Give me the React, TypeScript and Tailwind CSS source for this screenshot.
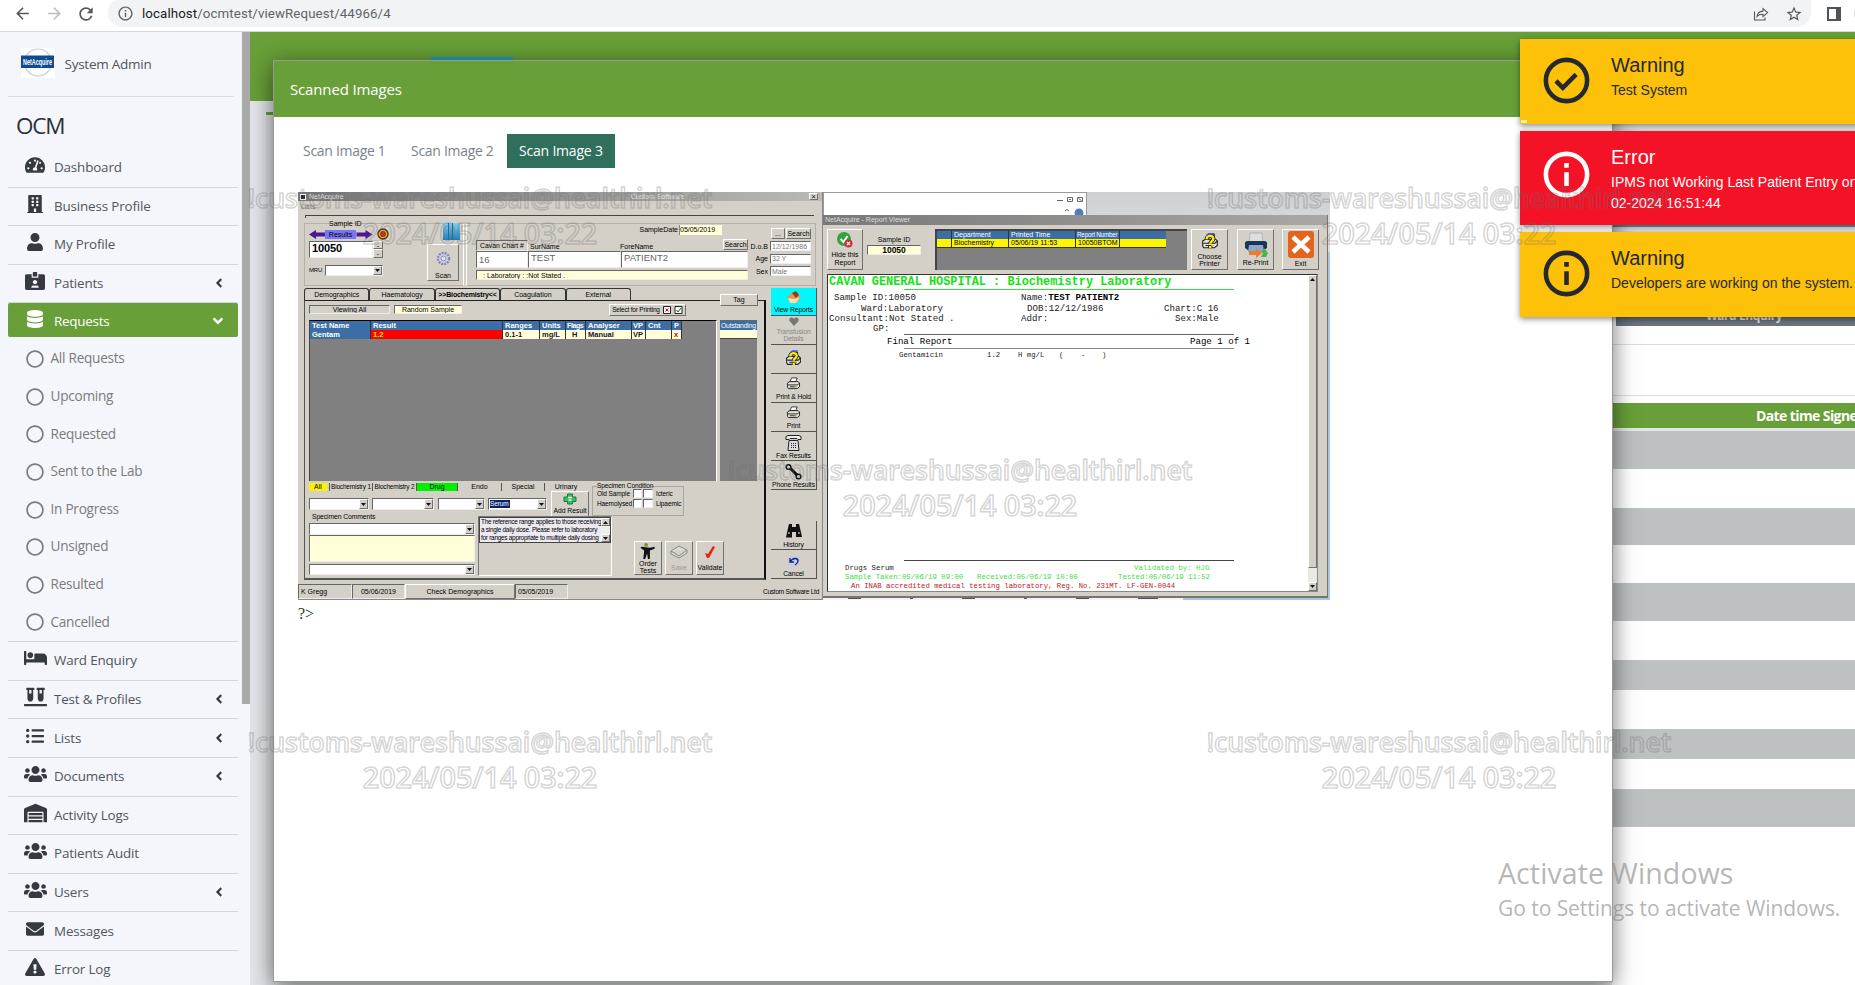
import React from "react";
import {
  FaTachometerAlt, FaBuilding, FaUser, FaIdCardAlt, FaDatabase, FaBed, FaVials, FaListUl,
  FaUsers, FaWarehouse, FaEnvelope, FaExclamationTriangle, FaAngleLeft, FaAngleDown, FaRegCircle,
} from "react-icons/fa";
import { MdArrowBack, MdArrowForward, MdRefresh, MdInfoOutline, MdStarBorder } from "react-icons/md";

type Kids = { children?: React.ReactNode; className?: string };

/* ---------- Browser bar ---------- */

function BrowserBar() {
  return (
    <div className="flex h-8 shrink-0 items-start border-b border-[#d5d7da] bg-white font-['Roboto',sans-serif]">
      <div className="flex h-[27px] w-[108px] shrink-0 items-center pl-[13px] text-[#54575b]">
        <MdArrowBack className="size-[19px]" />
        <MdArrowForward className="ml-[13px] size-[19px] text-[#bbbdc0]" />
        <MdRefresh className="ml-[12px] size-[20px]" />
      </div>
      <div className="flex h-[27px] w-[1703px] shrink-0 items-center rounded-b-[14px] rounded-tl-[10px] bg-[#f1f3f4] pl-[9px]">
        <MdInfoOutline className="size-[17px] text-[#5f6368]" />
        <span className="ml-[8px] text-[13.300px] tracking-[0.100px] text-[#5f6368]">
          <span className="text-[#202124]">localhost</span>/ocmtest/viewRequest/44966/4
        </span>
        <div className="ml-auto flex items-center gap-[16px] pr-[8px] text-[#54575b]">
          <svg viewBox="0 0 16 16" className="size-[16px]" fill="none" stroke="currentColor" strokeWidth="1.1">
            <path d="M1.500 5.500v8.500h10.500v-2.500" />
            <path d="M4 10.500c.4-3.300 2.300-5.200 6-5.400V2.600l4.600 4-4.600 4V8.200c-2.700 0-4.500.5-6 2.300z" />
          </svg>
          <MdStarBorder className="size-[18px]" />
        </div>
      </div>
      <div className="flex h-[27px] items-center pl-[16px]">
        <div className="h-[14px] w-[14px] border-2 border-r-[5px] border-[#505357]" />
        <div className="ml-[13px] size-[20px] shrink-0 rounded-full bg-[#dcdee0]" />
      </div>
    </div>
  );
}

/* ---------- Sidebar ---------- */

type Item = { label: string; icon: React.ComponentType<{ className?: string }>; arrow?: boolean; size?: string };

const topItems: Item[] = [
  { label: "Dashboard", icon: FaTachometerAlt, size: "h-[20px] w-[20px]" },
  { label: "Business Profile", icon: FaBuilding, size: "h-[18px] w-[18px]" },
  { label: "My Profile", icon: FaUser, size: "h-[18px] w-[18px]" },
  { label: "Patients", icon: FaIdCardAlt, arrow: true, size: "h-[20px] w-[20px]" },
];
const subItems = ["All Requests", "Upcoming", "Requested", "Sent to the Lab", "In Progress", "Unsigned", "Resulted", "Cancelled"];
const bottomItems: Item[] = [
  { label: "Ward Enquiry", icon: FaBed, size: "h-[22px] w-[23px]" },
  { label: "Test & Profiles", icon: FaVials, arrow: true, size: "h-[22px] w-[23px]" },
  { label: "Lists", icon: FaListUl, arrow: true, size: "h-[18px] w-[18px]" },
  { label: "Documents", icon: FaUsers, arrow: true, size: "h-[22px] w-[23px]" },
  { label: "Activity Logs", icon: FaWarehouse, size: "h-[22px] w-[23px]" },
  { label: "Patients Audit", icon: FaUsers, size: "h-[22px] w-[23px]" },
  { label: "Users", icon: FaUsers, arrow: true, size: "h-[22px] w-[23px]" },
  { label: "Messages", icon: FaEnvelope, size: "h-[18px] w-[18px]" },
  { label: "Error Log", icon: FaExclamationTriangle, size: "h-[20px] w-[20px]" },
];

function NavRow({ item }: { item: Item }) {
  const Icon = item.icon;
  return (
    <div className="flex h-[38.600px] shrink-0 items-center border-b border-[#d3d6da] pb-[1px] text-[#343a40]">
      <span className="flex w-[54px] -translate-y-[2px] justify-center">
        <Icon className={item.size} />
      </span>
      <span className="-ml-[8px] text-[13.400px] tracking-[-0.150px] text-[#50555b]">{item.label}</span>
      {item.arrow && <FaAngleLeft className="mr-[12px] ml-auto size-[14px]" />}
    </div>
  );
}

function Sidebar() {
  return (
    <aside className="flex w-[250px] shrink-0 bg-[#f4f6fb] font-['Open_Sans','Noto_Sans',sans-serif]">
      <nav className="flex w-[242px] shrink-0 flex-col overflow-hidden pr-[4px] pl-[8px]">
        <div className="mr-[4px] flex h-[65px] shrink-0 items-center border-b border-[#d9dbe0] pb-[2px] pl-[13px]">
          <svg viewBox="0 0 34 30" className="h-[30px] w-[34px]">
            <rect width="34" height="30" fill="#fff" />
            <circle cx="17" cy="14.500" r="13.500" fill="#fff" stroke="#ccc" strokeWidth="1.200" />
            <rect x="0" y="7.500" width="33" height="12.500" fill="#0f4b94" />
            <text x="2" y="16.800" fontSize="8.500" fontWeight="700" fill="#fff" textLength="29" lengthAdjust="spacingAndGlyphs" fontFamily="Liberation Sans">NetAcquire</text>
          </svg>
          <span className="mt-[2px] ml-[9.500px] text-[13.500px] tracking-[-0.250px] text-[#50555b]">System Admin</span>
        </div>
        <div className="flex h-[52px] shrink-0 items-center pt-[6px] pl-[8px] text-[22.500px] tracking-[-1.200px] text-[#2c3034]">OCM</div>
        <div className="flex flex-col">
          {topItems.map((i) => <NavRow key={i.label} item={i} />)}
          <div className="flex h-[34px] shrink-0 items-center rounded-[2px] bg-[#689f38] pt-px text-white">
            <span className="flex w-[54px] -translate-y-[2px] justify-center"><FaDatabase className="size-[18px]" /></span>
            <span className="-ml-[8px] text-[13.500px] tracking-[-0.300px]">Requests</span>
            <FaAngleDown className="mr-[12px] ml-auto size-[16px]" />
          </div>
          <div className="flex flex-col border-b border-[#d3d6da] pt-[3px]">
            {subItems.map((s) => (
              <div key={s} className="flex h-[37.600px] items-center pl-[17.500px] text-[#7b7b7b]">
                <FaRegCircle className="size-[18px]" />
                <span className="-mt-px ml-[7px] text-[13.600px] tracking-[-0.250px]">{s}</span>
              </div>
            ))}
          </div>
          {bottomItems.map((i) => <NavRow key={i.label} item={i} />)}
        </div>
      </nav>
      <div className="h-[672px] w-[8px] bg-[#a9a9a9]" />
    </aside>
  );
}

/* ---------- Page behind the dialog ---------- */

const stripes = [
  "h-[38px] bg-[#bdc1c1]", "h-[39px] bg-white", "h-[37px] bg-[#bdc1c1]", "h-[38px] bg-white", "h-[38px] bg-[#bdc1c1]",
  "h-[39px] bg-white", "h-[30px] bg-[#bdc1c1]", "h-[39px] bg-white", "h-[30px] bg-[#bdc1c1]", "h-[30px] bg-white", "h-[38px] bg-[#bdc1c1]",
];

function PageBehind() {
  return (
    <main className="flex min-w-0 flex-1 flex-col bg-[#e3e5ea]">
      <div className="flex h-[69px] shrink-0 items-start bg-[#689f38] pt-[25px] pl-[181px]">
        <div className="h-[10px] w-[82px] bg-[#17a2b8]" />
      </div>
      <div className="flex min-h-0 flex-1 flex-col pt-[11px] pl-[16px]">
        <div className="flex min-h-0 flex-1 flex-col border-t-[3px] border-[#689f38] bg-[#dfe1e6]">
          <div className="ml-[1346px] flex min-h-0 flex-1 flex-col bg-white">
            <div className="h-[109px] shrink-0 bg-[#e7e9ec]" />
            <div className="h-[3px] shrink-0 bg-[#5fa3b4]" />
            <div className="h-[7px] shrink-0 bg-[#e7e9ec]" />
            <div className="ml-[4px] flex h-[92px] shrink-0 items-end bg-gradient-to-b from-[#3d4a52] to-[#6c757d] pb-[3px] pl-[90px] font-['Open_Sans',sans-serif] text-[12px] leading-[15px] font-bold tracking-[-0.400px] text-white/80">
              Ward Enquiry
            </div>
            <div className="h-[19px] shrink-0 border-b border-[#dcdee0]" />
            <div className="h-[51px] shrink-0 border-b border-[#dcdee0]" />
            <div className="mt-[7px] flex h-[25px] shrink-0 items-center bg-[#689f38] pl-[144px] font-['Open_Sans',sans-serif] text-[14px] font-bold tracking-[-0.600px] whitespace-nowrap text-white">
              Date time Signed
            </div>
            <div className="h-[3px] shrink-0 bg-[#e3e5e6]" />
            {stripes.map((s, i) => <div key={i} className={`shrink-0 ${s}`} />)}
          </div>
        </div>
      </div>
    </main>
  );
}

/* ---------- Scanned picture: small controls ---------- */

const Raised = ({ children, className }: Kids) => (
  <div className={`flex shrink-0 flex-col items-center justify-center border border-t-white border-r-[#707070] border-b-[#707070] border-l-white bg-[#d4d0c8] text-center ${className}`}>{children}</div>
);
const Sunken = ({ children, className }: Kids) => (
  <div className={`flex shrink-0 items-center overflow-hidden border border-t-[#666] border-r-[#eee] border-b-[#eee] border-l-[#666] ${className}`}>{children}</div>
);
const Combo = ({ children, className }: Kids) => (
  <Sunken className={`bg-white ${className}`}>
    {children}
    <Raised className="ml-auto h-full w-[9px]">
      <svg viewBox="0 0 5 3" className="h-[3px] w-[5px]"><path d="M0 0h5L2.500 3z" fill="#111" /></svg>
    </Raised>
  </Sunken>
);

const PrinterIcon = ({ help, className }: { help?: boolean; className: string }) => (
  <svg viewBox="0 0 16 14" className={className}>
    <path d="M4 5l2-4h6l-1.500 4z" fill="#fff" stroke="#222" strokeWidth=".9" />
    <path d="M1.500 6.500L4 5h9l1.500 1.500v4L12 12.500H2.500l-1-1.500z" fill="#e5e3dd" stroke="#222" />
    <path d="M2 8.500h10.500l2-2M4 10.500h7" stroke="#222" fill="none" />
    <path d="M9 10.500h2" stroke="#d8c800" />
    {help && <path d="M5 5c0-4 6-4 6-.5C11 7 8.200 6.500 8.200 9M8.200 11v2" stroke="#111" strokeWidth="3.600" fill="none" />}
    {help && <path d="M5 5c0-4 6-4 6-.5C11 7 8.200 6.500 8.200 9M8.200 11v2" stroke="#ffee00" strokeWidth="2.200" fill="none" />}
    {help && <path d="M5 1.500L7 0h5" stroke="#4e57d6" strokeWidth="1.400" fill="none" />}
  </svg>
);

const ToolButton = ({ label, children, className }: Kids & { label: string }) => (
  <div className={`flex w-[46px] shrink-0 flex-col items-center justify-end border-r border-b border-[#55534f] text-center leading-[7px] ${className}`}>
    {children}
    <span className="whitespace-nowrap">{label}</span>
  </div>
);

function Toolbar() {
  return (
    <div className="ml-[5px] flex w-[46px] flex-col text-[6.800px] tracking-[-0.100px] text-black">
      <ToolButton label="View Reports" className="h-[28px] bg-[#00f8fc] pb-[2px]">
        <svg viewBox="0 0 16 13" className="mb-[2px] h-[13px] w-[16px]">
          <path d="M1 6l6-5 5 2 3 4-5 5H4z" fill="#d99b4c" /><path d="M6 2l4-2 3 4-3 3z" fill="#a3341c" /><path d="M2 7l6 1 6-2-4 6H4z" fill="#f5dfae" />
        </svg>
      </ToolButton>
      <ToolButton label="Transfusion" className="h-[29px] text-[#8b8984]">
        <svg viewBox="0 0 10 9" className="mb-[2px] h-[9px] w-[10px]"><path d="M5 9L.5 4C-.5 0 4-.5 5 2c1-2.500 5.500-2 4.500 2z" fill="#777" /></svg>
        <span className="order-last pb-[2px]">Details</span>
      </ToolButton>
      <ToolButton label="" className="h-[29px] pb-[6px]"><PrinterIcon help className="h-[17px] w-[17px]" /></ToolButton>
      <ToolButton label="Print & Hold" className="h-[29px] pb-[2px]"><PrinterIcon className="mb-[3px] h-[13px] w-[15px]" /></ToolButton>
      <ToolButton label="Print" className="h-[29px] pb-[2px]"><PrinterIcon className="mb-[3px] h-[13px] w-[15px]" /></ToolButton>
      <ToolButton label="Fax Results" className="h-[29px] pb-[1px]">
        <svg viewBox="0 0 17 17" className="h-[18px] w-[17px]">
          <path d="M1 5V2l2-1h11l2 1v3h-3l-1-1H5L4 5z" fill="#eee" stroke="#222" /><path d="M4 6h9l1 10H3z" fill="#ddd" stroke="#222" /><path d="M6 9h5M6 11h5M6 13h5" stroke="#222" strokeDasharray="1 1" />
        </svg>
      </ToolButton>
      <ToolButton label="Phone Results" className="h-[29px] pb-[1px]">
        <svg viewBox="0 0 17 17" className="mb-px h-[17px] w-[17px]"><path d="M3 3l11 11" stroke="#111" strokeWidth="3" /><circle cx="3.500" cy="4" r="2.300" fill="#ddd" stroke="#111" strokeWidth="1.500" /><circle cx="13.500" cy="13.500" r="2.300" fill="#ddd" stroke="#111" strokeWidth="1.500" /></svg>
      </ToolButton>
      <ToolButton label="History" className="mt-[31px] h-[29px] pb-[1px]">
        <svg viewBox="0 0 16 14" className="mb-[3px] h-[14px] w-[16px]"><path d="M3 0h3v3h4V0h3l1 4 2 9h-6V8H6v5.500H0L2 4z" fill="#111" /><path d="M2 9h2M12 9h2" stroke="#eee" /></svg>
      </ToolButton>
      <ToolButton label="Cancel" className="h-[29px] pb-[1px]">
        <svg viewBox="0 0 12 10" className="mb-[4px] h-[10px] w-[12px] bg-[#c6cbe0]"><path d="M2 2v4h4M2 6c3-5 8-4 8-1 0 2-1.500 3-3 4" fill="none" stroke="#16227e" strokeWidth="1.300" /></svg>
      </ToolButton>
    </div>
  );
}

const GridCell = ({ children, className }: Kids) => <span className={`shrink-0 overflow-hidden border-r border-[#333] pl-[2px] ${className}`}>{children}</span>;

function PatientHeader() {
  return (
    <div className="flex h-[63px] shrink-0 pl-[6px]">
      <div className="flex w-[160px] shrink-0 border border-[#b5b1aa] border-r-white">
        <div className="flex w-[106px] shrink-0 flex-col pl-[4px]">
          <span className="-mt-[4px] ml-[20px] h-[9px] leading-[8px]">Sample ID</span>
          <div className="flex h-[12px] items-center pb-[2px]">
            <svg viewBox="0 0 16 9" className="h-[9px] w-[16px]"><path d="M0 4.500L7 0v2.500h9v4H7V9z" fill="#4b1796" /></svg>
            <span className="h-[9px] w-[31px] bg-[#7a76f4] text-center leading-[9px]">Results</span>
            <svg viewBox="0 0 16 9" className="h-[9px] w-[17px]"><path d="M16 4.500L9 0v2.500H0v4h9V9z" fill="#4b1796" /></svg>
            <svg viewBox="0 0 12 12" className="-mt-[1px] ml-[4px] size-[12px]"><circle cx="6" cy="6" r="5" fill="#f0b429" stroke="#5c2208" strokeWidth="1.300" /><circle cx="6" cy="6" r="2.600" fill="#d22" stroke="#641" strokeWidth=".9" /></svg>
          </div>
          <div className="flex h-[18px]">
            <Sunken className="h-[17px] w-[64px] bg-white pb-[2px] pl-[2px] text-[11px] font-bold tracking-[-0.100px]">10050</Sunken>
            <div className="flex flex-col"><Raised className="h-[8px] w-[10px]">-</Raised><Raised className="h-[9px] w-[10px]">-</Raised></div>
          </div>
          <div className="mt-[6px] flex h-[11px] items-center"><span className="w-[16px] text-[6px] tracking-[-0.200px]">MRU</span><Combo className="h-[11px] w-[58px]" /></div>
        </div>
        <div className="flex flex-col items-center pl-[15px]">
          <div className="-mt-px ml-[17px] flex h-[17px] w-[17px] shrink-0 bg-gradient-to-b from-[#7fd0ee] to-[#1b7fb8]">
            <div className="mx-[5px] w-[5px] border-x border-[#1c6d9d]" />
          </div>
          <Raised className="mt-[4px] h-[37px] w-[32px] gap-[6px] leading-[7px]">
            <svg viewBox="0 0 16 16" className="mt-[5px] size-[15px]"><circle cx="8" cy="8" r="6" fill="#c8cbe6" stroke="#8288b5" strokeWidth="2.500" strokeDasharray="2 1.200" /><circle cx="8" cy="8" r="2.500" fill="#e4e3ea" stroke="#8a8eb5" /></svg>
            Scan
          </Raised>
        </div>
      </div>
      <div className="ml-[2px] flex w-[350px] shrink-0 border border-[#b5b1aa] border-l-white pl-[9px]">
        <div className="flex w-[274px] shrink-0 flex-col">
          <div className="flex h-[11px] items-center justify-end pr-[28px]"><span>SampleDate</span><span className="ml-[1px] h-[10px] w-[43px] border-l border-[#888] bg-[#fffed8] leading-[10px]">05/05/2019</span></div>
          <div className="mt-[5px] flex h-[11px] items-end">
            <Sunken className="h-[11px] w-[52px] justify-center text-[6.800px] leading-[9px]">Cavan Chart #</Sunken>
            <span className="w-[92px] pl-[2px]">SurName</span><span className="w-[103px]">ForeName</span>
            <Raised className="mb-px h-[11px] w-[25px]">Search</Raised>
          </div>
          <div className="flex h-[17px] text-[9.500px] text-[#666]">
            <Sunken className="w-[52px] bg-white pl-[2px]">16</Sunken>
            <Sunken className="w-[93px] bg-white pb-[4px] pl-[2px]">TEST</Sunken>
            <Sunken className="w-[127px] bg-white pb-[4px] pl-[2px]">PATIENT2</Sunken>
          </div>
          <Sunken className="mt-[2px] h-[10px] w-[272px] bg-[#fffed8] pl-[6px]">: Laboratory : :Not Stated .</Sunken>
        </div>
        <div className="flex flex-col pt-[4px]">
          <div className="flex h-[11px] justify-end gap-[1px]"><Raised className="w-[14px]">...</Raised><Raised className="w-[25px]">Search</Raised></div>
          {[["D.o.B", "12/12/1986"], ["Age", "32 Y"], ["Sex", "Male"]].map(([k, v]) => (
            <div key={k} className="mt-[1.500px] flex h-[11px] items-center"><span className="w-[20px] pr-[2px] text-right">{k}</span><Sunken className="h-[10px] w-[41px] bg-white pl-px text-[#777]">{v}</Sunken></div>
          ))}
        </div>
      </div>
    </div>
  );
}

const tabLabels = ["Demographics", "Haematology", ">>Biochemistry<<", "Coagulation", "External"];

function ResultsPanel() {
  return (
    <div className="ml-[6px] flex h-[292px] w-[462px] shrink-0 flex-col">
      <div className="flex h-[12px] shrink-0">
        {tabLabels.map((t, i) => (
          <span key={t} className={`w-[65.400px] rounded-t-[3px] border border-b-0 border-[#333] text-center leading-[12px] ${i === 2 ? "font-bold tracking-[-0.150px]" : ""}`}>{t}</span>
        ))}
      </div>
      <div className="flex h-[280px] flex-col border border-t-[#222] border-r-2 border-r-[#111] border-b-2 border-b-[#555] border-l-[#555] pl-[4px]">
        <div className="flex h-[19px] shrink-0 items-center pb-[2px]">
          <Sunken className="h-[9px] w-[81px] justify-center">Viewing All</Sunken>
          <Sunken className="ml-[4px] h-[9px] w-[68px] justify-center bg-[#fffed8]">Random Sample</Sunken>
          <Raised className="ml-[147px] h-[12px] w-[77px]">
            <span className="flex items-center gap-[3px] text-[6.500px] tracking-[-0.200px] whitespace-nowrap">Select for Printing
              <svg viewBox="0 0 20 8" className="h-[8px] w-[20px]"><path d="M.5.5h7v7h-7zM12 .5h7v7h-7z" fill="#fff" stroke="#222" /><path d="M2.500 2.500l3 3m0-3l-3 3" stroke="#c00" /><path d="M13.500 4l1.500 2 3-4" stroke="#070" fill="none" /></svg>
            </span>
          </Raised>
          <Raised className="-mt-[20px] ml-[34px] h-[12px] w-[38px]">Tag</Raised>
        </div>
        <div className="flex h-[161px] shrink-0">
          <div className="h-[161px] w-[408px] border-t border-r border-l border-r-white border-l-[#444] bg-[#808080] text-[7.500px] leading-[9px] font-bold">
            <div className="flex h-[9px] w-[372px] bg-[#3a6ea5] text-white">
              <GridCell className="w-[61px]">Test Name</GridCell><GridCell className="w-[132px]">Result</GridCell><GridCell className="w-[37px]">Ranges</GridCell><GridCell className="w-[26px]">Units</GridCell><GridCell className="w-[20px] pl-px text-[7px] tracking-[-0.400px]">Flags</GridCell><GridCell className="w-[46px]">Analyser</GridCell><GridCell className="w-[14px] pl-px">VP</GridCell><GridCell className="w-[26px]">Cnt</GridCell><GridCell className="w-[10px]">P</GridCell>
            </div>
            <div className="flex h-[9px] w-[372px] bg-[#fffed8] text-[#17172e]">
              <GridCell className="w-[61px] bg-[#3a6ea5] text-white">Gentam</GridCell><GridCell className="w-[132px] bg-[#ff0000] text-[#ffe600]">1.2</GridCell><GridCell className="w-[37px]">0.1-1</GridCell><GridCell className="w-[26px]">mg/L</GridCell><GridCell className="w-[20px] pl-[6px]">H</GridCell><GridCell className="w-[46px]">Manual</GridCell><GridCell className="w-[14px] pl-px">VP</GridCell><GridCell className="w-[26px]" /><GridCell className="w-[10px] text-[#d00]">x</GridCell>
            </div>
          </div>
          <div className="ml-[3px] h-[161px] w-[37px] border-t border-[#666] bg-[#808080]">
            <div className="h-[9px] bg-[#3a6ea5] text-center text-[6.800px] leading-[9px] tracking-[-0.150px] text-white">Outstanding</div>
            <div className="h-[9px] border-b border-[#444] bg-[#fffed8]" />
          </div>
        </div>
        <div className="flex h-[94px]">
          <div className="flex w-[283px] shrink-0 flex-col">
            <div className="mt-[2px] flex h-[8px] text-center leading-[8px]">
              <span className="w-[20px] border-r-2 border-[#d4d0c8] bg-[#fff200]">All</span><span className="w-[43px] border-l border-[#555] text-[6.500px] tracking-[-0.200px] whitespace-nowrap">Biochemistry 1</span><span className="w-[44px] border-l border-[#555] text-[6.500px] tracking-[-0.200px] whitespace-nowrap">Biochemistry 2</span><span className="w-[42px] border-x border-[#555] bg-[#00f000]">Drug</span><span className="w-[44px] border-r border-[#555]">Endo</span><span className="w-[43px] border-r border-[#555]">Special</span><span className="w-[42px]">Urinary</span>
            </div>
            <div className="flex h-[26px] items-center">
              <Combo className="h-[12px] w-[60px]" /><Combo className="ml-[3px] h-[12px] w-[62px]" /><Combo className="ml-[4px] h-[12px] w-[47px]" />
              <Combo className="ml-[3px] h-[12px] w-[59px]"><span className="ml-px h-[8px] w-[20px] bg-[#0a246a] text-[6.500px] leading-[8px] tracking-[-0.100px] text-white">Serum</span></Combo>
              <Raised className="ml-[4px] h-[26px] w-[38px] text-[6.800px] leading-[8px] whitespace-nowrap">
                <svg viewBox="0 0 14 12" className="mb-[2px] h-[12px] w-[14px]"><path d="M4.500 1h5v3H13v4.500H9.500V11h-5V8.500H1V4h3.500z" fill="#3dbb67" stroke="#1c7a3a" /><path d="M5 4.500h4M5.500 7h3" stroke="#d9f7e1" strokeWidth="1.500" /></svg>
                Add Result
              </Raised>
            </div>
            <div className="flex">
              <div className="flex h-[58px] w-[166px] shrink-0 flex-col">
                <span className="-mt-[4px] h-[10px] pl-[3px] text-[6.800px] leading-[8px] tracking-[-0.100px]">Specimen Comments</span>
                <Combo className="h-[12px] w-[166px]" />
                <Sunken className="h-[27px] w-[166px] bg-[#fffed8]" />
                <Combo className="mt-[2px] h-[11px] w-[166px]" />
              </div>
              <div className="-mt-px ml-[3px] flex h-[60px] w-[134px] shrink-0 flex-col border border-t-[#777] border-r-white border-b-white border-l-[#777]">
                <div className="flex h-[26px] border border-[#444] bg-[#eceaf0]">
                  <p className="w-[121px] pl-px text-[6.400px] leading-[8px] tracking-[-0.250px] whitespace-nowrap">The reference range applies to those receiving<br />a single daily dose. Please refer to laboratory<br />for ranges appropriate to multiple daily dosing</p>
                  <div className="ml-auto flex w-[9px] shrink-0 flex-col justify-between bg-[#eee]">
                    <Raised className="h-[8px]"><svg viewBox="0 0 5 3" className="h-[3px] w-[5px]"><path d="M0 3h5L2.500 0z" fill="#111" /></svg></Raised>
                    <Raised className="h-[8px]"><svg viewBox="0 0 5 3" className="h-[3px] w-[5px]"><path d="M0 0h5L2.500 3z" fill="#111" /></svg></Raised>
                  </div>
                </div>
              </div>
            </div>
          </div>
          <div className="flex flex-col">
            <div className="mt-[5px] flex h-[30px] w-[92px] flex-col border border-[#aaa69f] pl-[4px] text-[6.500px] tracking-[-0.100px] whitespace-nowrap">
              <span className="-mt-[6px] h-[8px] w-[54px] bg-[#d4d0c8] leading-[9px]">Specimen Condition</span>
              <div className="flex h-[9px] items-center"><span className="w-[36px]">Old Sample</span><Sunken className="size-[9px] bg-white" /><Sunken className="ml-px h-[9px] w-[10px] bg-white" /><span className="ml-[3px]">Icteric</span></div>
              <div className="flex h-[10px] items-center"><span className="w-[36px]">Haemolysed</span><Sunken className="size-[9px] bg-white" /><Sunken className="ml-px h-[9px] w-[10px] bg-white" /><span className="ml-[3px]">Lipaemic</span></div>
            </div>
            <div className="mt-[25px] ml-[42px] flex gap-[3px] leading-[7px]">
              <Raised className="h-[34px] w-[28px]">
                <svg viewBox="0 0 16 18" className="h-[17px] w-[16px]"><circle cx="6" cy="2" r="2" fill="#8c8732" /><path d="M1 4l9 1 5-1v2l-5 2v9H8l-1-6-2 6H3l1-9-4-3z" fill="#111" /></svg>
                Order<br />Tests
              </Raised>
              <Raised className="h-[34px] w-[28px] text-[#999]"><svg viewBox="0 0 18 14" className="mb-[5px] h-[14px] w-[18px]"><path d="M1 6l8-5 8 4-8 6zM1 6v3l8 4 8-5V5" fill="#dedbd5" stroke="#888" /></svg>Save</Raised>
              <Raised className="h-[34px] w-[28px]"><svg viewBox="0 0 12 14" className="mb-[5px] h-[14px] w-[12px]"><path d="M1 8l3 1 5-8 2 1-6 11H3z" fill="#e8211d" /></svg>Validate</Raised>
            </div>
          </div>
        </div>
      </div>
    </div>
  );
}

function ResultsWindow() {
  return (
    <div className="absolute top-0 left-0 flex h-[408px] w-[525px] flex-col overflow-hidden border-r border-b border-[#888] bg-[#d4d0c8] text-[7px] leading-[9px] text-black">
      <div className="flex h-[9px] shrink-0 items-center bg-gradient-to-r from-[#777] to-[#bab8b4] pl-[2px] text-[#e6e6e6]">
        <span className="size-[6px] border border-white bg-[#222]" />
        <span className="ml-[3px]">NetAcquire</span>
        <span className="ml-[287px]">Custom Software</span>
        <Raised className="mr-[4px] ml-auto h-[7px] w-[9px] text-black">×</Raised>
      </div>
      <span className="h-[14px] shrink-0 pl-[3px] leading-[12px] text-[#777]">Lists</span>
      <div className="ml-[7px] h-[3px] w-[509px] shrink-0 border-t border-l border-[#444]" />
      <div className="h-[5px] shrink-0" />
      <PatientHeader />
      <div className="flex h-[294px] shrink-0 pt-[2px]">
        <ResultsPanel />
        <Toolbar />
      </div>
      <div className="mt-[4px] flex h-[15px] shrink-0 items-stretch">
        <Sunken className="w-[54px] pl-[2px]">K Gregg</Sunken>
        <Sunken className="w-[53px] justify-center">05/06/2019</Sunken>
        <Raised className="w-[110px]">Check Demographics</Raised>
        <Sunken className="w-[53px] pl-[2px]">05/05/2019</Sunken>
        <span className="mr-[3px] ml-auto self-center text-[6.500px] tracking-[-0.250px]">Custom Software Ltd</span>
      </div>
    </div>
  );
}

/* ---------- Scanned picture: report viewer ---------- */

const Line = ({ className }: Kids) => <div className={`ml-[76px] w-[330px] shrink-0 border-t ${className}`} />;

function ReportPaper() {
  return (
    <div className="flex h-[318px] w-[491px] shrink-0 border border-t-[#333] border-r-[#888] border-b-[#888] border-l-[#333] bg-white">
      <div className="flex w-[480px] shrink-0 flex-col font-['Liberation_Mono',monospace] text-[9.100px] whitespace-pre text-[#222]">
        <div className="h-[14px] pt-px pl-[1px] font-bold text-[#18e018]"><span className="text-[11.900px] leading-[13px]">CAVAN GENERAL HOSPITAL : Biochemistry Laboratory</span></div>
        <Line className="border-[#3bdc3b]" />
        <div className="flex h-[13px] items-center pt-[3px] pl-[6px]"><span className="w-[187px]">Sample ID:10050</span>Name:<b className="text-black">TEST PATIENT2</b></div>
        <div className="flex h-[11px] items-center pl-[33px]"><span className="w-[166px]">Ward:Laboratory</span><span className="w-[137px]">DOB:12/12/1986</span>Chart:C 16</div>
        <div className="flex h-[10px] items-center pl-[1px]"><span className="w-[192px]">Consultant:Not Stated .</span><span className="w-[154px]">Addr:</span>Sex:Male</div>
        <div className="flex h-[10px] items-center pl-[45px]">GP:</div>
        <Line className="border-[#666]" />
        <div className="flex h-[13px] items-center pl-[59px] text-black"><span className="w-[303px]">Final Report</span>Page 1 of 1</div>
        <Line className="border-[#888]" />
        <div className="flex h-[12px] items-center pl-[71px] text-[7.300px]"><span className="w-[88px]">Gentamicin</span><span className="w-[31px]">1.2</span><span className="w-[41px]">H mg/L</span><span className="w-[22px]">(</span><span className="w-[21px]">-</span>)</div>
        <Line className="mt-[199px] border-[#444]" />
        <div className="flex h-[11px] items-end pl-[17px] text-[7.400px] leading-[8px]"><span className="w-[289px]">Drugs Serum</span><span className="text-[#4be04b]">Validated by: HJG</span></div>
        <div className="flex h-[9px] items-center pl-[17px] text-[7.300px] text-[#3fdc3f]"><span className="w-[132px]">Sample Taken:05/06/19 09:00</span><span className="w-[141px]">Received:05/06/19 10:00</span>Tested:05/06/19 11:52</div>
        <div className="flex h-[9px] items-center pl-[23px] text-[7.300px] text-[#c4161c]">An INAB accredited medical testing laboratory, Reg. No. 231MT. LF-GEN-0044</div>
      </div>
      <div className="flex w-[9px] shrink-0 flex-col justify-between bg-[#ebe9e4]">
        <Raised className="h-[293px] justify-start pt-[2px]"><svg viewBox="0 0 5 3" className="h-[3px] w-[5px]"><path d="M0 3h5L2.500 0z" fill="#111" /></svg></Raised>
        <Raised className="h-[9px]"><svg viewBox="0 0 5 3" className="h-[3px] w-[5px]"><path d="M0 0h5L2.500 3z" fill="#111" /></svg></Raised>
      </div>
    </div>
  );
}

function ReportWindow() {
  return (
    <div className="absolute top-[23px] left-[525px] flex h-[383px] w-[505px] flex-col border-r border-b-2 border-[#77756f] bg-[#d4d0c8] text-[7px] leading-[8px] text-black">
      <div className="h-[10px] shrink-0 bg-gradient-to-r from-[#787878] to-[#a9a8a6] pl-[2px] leading-[10px] text-[#dedede]">NetAcquire - Report Viewer</div>
      <div className="mt-[4px] ml-[4px] flex h-[42px] shrink-0">
        <Raised className="h-[41px] w-[36px]">
          <svg viewBox="0 0 16 16" className="mb-[3px] size-[16px]"><circle cx="7" cy="7" r="7" fill="#2fa53b" /><path d="M3.500 7l3 3 4-6" stroke="#fff" strokeWidth="2" fill="none" /><circle cx="11.500" cy="11.500" r="4" fill="#d62b36" /><path d="M10 10l3 3m0-3l-3 3" stroke="#fff" strokeWidth="1.200" /></svg>
          Hide this<br />Report
        </Raised>
        <div className="ml-[4px] flex w-[54px] flex-col items-center pt-[7px]">Sample ID<Sunken className="mt-px h-[10px] w-[54px] justify-center bg-[#fffed8] text-[8.500px] font-bold">10050</Sunken></div>
        <div className="ml-[14px] h-[41px] w-[252px] border-2 border-r-0 border-b-0 border-[#444] bg-[#808080]">
          <div className="flex h-[8px] w-[229px] bg-[#3a6ea5] whitespace-nowrap text-white"><GridCell className="w-[15px]" /><GridCell className="w-[57px]">Department</GridCell><GridCell className="w-[67px]">Printed Time</GridCell><GridCell className="w-[44px] pl-px text-[6.300px] tracking-[-0.200px]">Report Number</GridCell></div>
          <div className="flex h-[9px] w-[229px] border-b border-[#333] bg-[#fff500]"><GridCell className="w-[15px]" /><GridCell className="w-[57px]">Biochemistry</GridCell><GridCell className="w-[67px]">05/06/19 11:53</GridCell><GridCell className="w-[44px]">10050BTOM</GridCell></div>
        </div>
        <Raised className="ml-[4px] h-[41px] w-[37px] leading-[7px]"><PrinterIcon help className="mb-[3px] h-[17px] w-[18px]" />Choose<br />Printer</Raised>
        <Raised className="ml-[9px] h-[41px] w-[37px]">
          <svg viewBox="0 0 24 27" className="h-[27px] w-[24px]"><path d="M6 1h12l1 9H5z" fill="#dcdde0" stroke="#999" strokeWidth=".6" /><path d="M1 11q0-2 3-2h16q3 0 3 2v5l-4 3H5l-4-3z" fill="#1e3453" /><path d="M5 13h14l1 7H4z" fill="#86a9cf" /><path d="M5 19h7v-3l6 5-6 5v-3H5z" fill="#f47a26" /><path d="M24 21l-4-5-3 4 2 1-2 4h5z" fill="#48b749" /></svg>
          Re-Print
        </Raised>
        <Raised className="ml-[8px] h-[41px] w-[37px] border-t-[#222] border-r-[#222]">
          <svg viewBox="0 0 26 27" className="mb-[2px] h-[27px] w-[26px]"><rect width="26" height="27" rx="3" fill="#e3641b" /><path d="M5 6l16 15M21 6L5 21" stroke="#fff" strokeWidth="4.500" /></svg>
          Exit
        </Raised>
      </div>
      <div className="mt-[3px] ml-[4px] flex"><ReportPaper /></div>
    </div>
  );
}

function ScannedPicture() {
  return (
    <div className="relative h-[408px] w-[1032px] shrink-0 overflow-hidden bg-[#a9c6ea] font-['Liberation_Sans',sans-serif]">
      <div className="flex h-[60px] pl-[525px]">
        <div className="flex w-[264px] justify-end border border-[#999] bg-white pt-[3px] pr-[2px]">
          <svg viewBox="0 0 28 20" className="h-[20px] w-[28px]" fill="none" stroke="#666"><path d="M1 4.500h6M11.500 1.500h5v4h-5zM13 3.500h2M21.500 1.500h5v4h-5zM22.500 2.500l3 2" /><path d="M9 15l2-1.500 2 1.500" /><circle cx="23" cy="17" r="4.500" fill="#4d7fc0" stroke="none" /></svg>
        </div>
        <div className="flex-1 bg-gradient-to-b from-[#cfd0d3] to-[#dedfe2]" />
      </div>
      <div className="mt-[346px] ml-[525px] flex h-[2px] w-[360px] items-start justify-around bg-[#f4f4f4]">
        <div className="h-px w-[13px] bg-[#555]" /><div className="h-px w-[3px] bg-[#555]" /><div className="h-px w-[13px] bg-[#555]" /><div className="h-px w-[3px] bg-[#555]" /><div className="h-px w-[13px] bg-[#555]" /><div className="h-px w-[20px] bg-[#555]" />
      </div>
      <ResultsWindow />
      <ReportWindow />
    </div>
  );
}

/* ---------- Dialog ---------- */

function Dialog() {
  return (
    <section className="absolute top-[60px] left-[273px] flex h-[922px] w-[1340px] flex-col border border-black/40 bg-white shadow-[0_5px_22px_rgba(0,0,0,0.550)]">
      <header className="flex h-[56px] shrink-0 items-center bg-[#689f38] pl-[16px] font-['Open_Sans',sans-serif] text-[15px] tracking-[-0.150px] text-white">Scanned Images</header>
      <div className="mt-[17px] ml-[16px] flex h-[34px] shrink-0 items-center font-['Open_Sans',sans-serif] text-[14px] tracking-[-0.300px] text-[#7a828a]">
        <span className="flex h-full w-[109px] items-center pb-px pl-[13px]">Scan Image 1</span>
        <span className="flex h-full w-[108px] items-center pb-px pl-[12px]">Scan Image 2</span>
        <span className="flex h-full w-[108px] items-center bg-[#2f6f5b] pb-px pl-[12px] tracking-[-0.200px] text-white">Scan Image 3</span>
      </div>
      <div className="mt-[24px] ml-[24px] flex flex-col">
        <ScannedPicture />
        <span className="font-['Liberation_Serif',serif] text-[16px] leading-[28px] text-[#333]">?&gt;</span>
      </div>
    </section>
  );
}

/* ---------- Overlays ---------- */

type ToastProps = { title: string; lines: string[]; icon: "check" | "info"; className: string; iconTop: string };

function Toast({ title, lines, icon, className, iconTop }: ToastProps) {
  return (
    <div className={`flex w-[345px] shrink-0 shadow-[0_2px_6px_rgba(0,0,0,0.450)] ${className}`}>
      <div className={`flex w-[91px] shrink-0 items-start pl-[18.500px] ${iconTop}`}>
        <svg viewBox="0 0 24 24" className="size-[55px]" fill="none" stroke="currentColor" strokeWidth="2">
          <circle cx="12" cy="12" r="9" />
          {icon === "check" ? <path d="M7.400 12.200l3 3 5.800-5.900" /> : <path d="M12 7v2M12 11v6" />}
        </svg>
      </div>
      <div className="flex flex-col pt-[14px] whitespace-nowrap">
        <h4 className="mb-[3px] text-[20px] leading-[24px]">{title}</h4>
        {lines.map((l) => <p key={l} className="text-[14px] leading-[21px]">{l}</p>)}
      </div>
    </div>
  );
}

function Toasts() {
  return (
    <div className="absolute top-[39px] left-[1520px] flex flex-col gap-[7px] font-['Liberation_Sans',sans-serif]">
      <Toast className="h-[85px] bg-[#fec10a] text-[#24292d]" iconTop="pt-[14px]" icon="check" title="Warning" lines={["Test System"]} />
      <Toast className="h-[94px] bg-[#f41227] text-white" iconTop="pt-[16px]" icon="info" title="Error" lines={["IPMS not Working Last Patient Entry on 21-", "02-2024 16:51:44"]} />
      <Toast className="h-[85px] bg-[#fec10a] text-[#24292d]" iconTop="pt-[14px]" icon="info" title="Warning" lines={["Developers are working on the system."]} />
      <div className="absolute top-[81px] left-[1px] h-[3px] w-[6px] bg-[#f3e8c8]" />
    </div>
  );
}

const Watermark = ({ className }: Kids) => (
  <div className={`absolute flex w-[470px] flex-col items-center font-['Open_Sans',sans-serif] font-semibold whitespace-nowrap text-transparent [-webkit-text-stroke:1.500px_rgba(110,110,110,0.300)] ${className}`}>
    <span className="text-[26.500px] leading-[34px]">!customs-wareshussai@healthirl.net</span>
    <span className="text-[28.700px] leading-[36px]">2024/05/14 03:22</span>
  </div>
);

export default function App() {
  return (
    <div className="relative flex h-[985px] w-[1855px] flex-col overflow-hidden bg-white">
      <BrowserBar />
      <div className="flex min-h-0 flex-1">
        <Sidebar />
        <PageBehind />
      </div>
      <div className="absolute inset-y-0 right-0 left-[250px] overflow-hidden [clip-path:inset(32px_0_0_0)]">
        <div className="absolute inset-y-0 -left-[250px] w-[1855px]"><Dialog /></div>
      </div>
      <Toasts />
      <Watermark className="top-[181px] left-[245px]" />
      <Watermark className="top-[181px] left-[1204px]" />
      <Watermark className="top-[453px] left-[725px]" />
      <Watermark className="top-[725px] left-[245px]" />
      <Watermark className="top-[725px] left-[1204px]" />
      <div className="absolute top-[855px] left-[1498px] font-['Open_Sans',sans-serif] whitespace-nowrap text-[#8c8c8c]/65">
        <p className="text-[28.500px] leading-[37px] tracking-[0.100px]">Activate Windows</p>
        <p className="text-[21px] leading-[33px] tracking-[-0.050px]">Go to Settings to activate Windows.</p>
      </div>
    </div>
  );
}
